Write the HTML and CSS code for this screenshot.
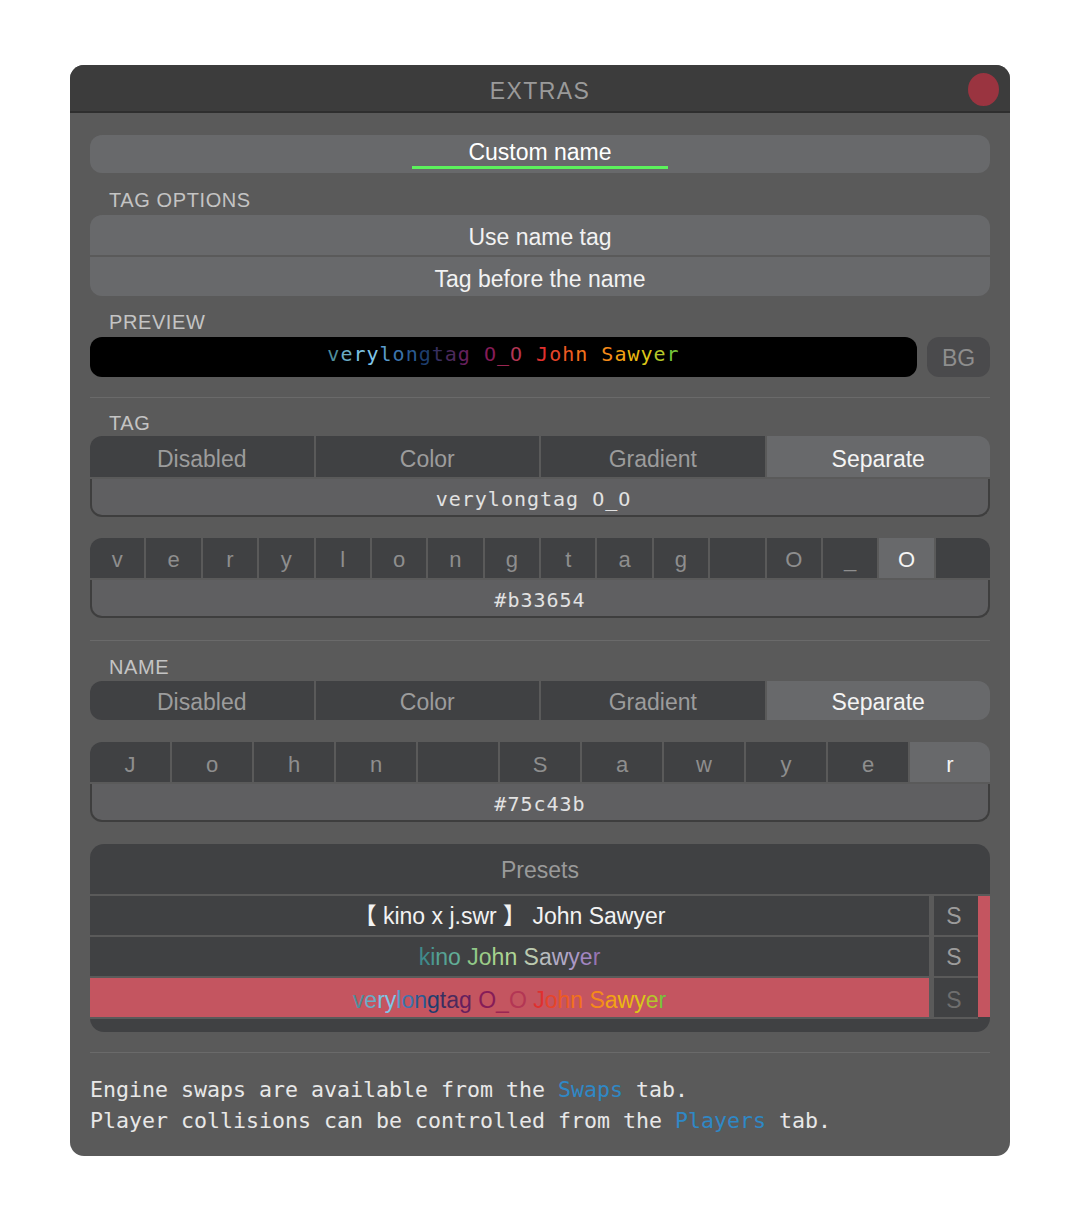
FILE: index.html
```html
<!DOCTYPE html>
<html>
<head>
<meta charset="utf-8">
<title>Extras</title>
<link rel="stylesheet" href="styles.css">
</head>
<body>
<div class="win">
  <div class="titlebar">
    <span class="title">EXTRAS</span>
    <span class="close"></span>
  </div>
  <div class="content">
    <div class="tabs"><div class="tab">Custom name</div></div>

    <div class="label l-opts">TAG OPTIONS</div>
    <div class="btngroup">
      <div class="btn">Use name tag</div>
      <div class="btn btn2">Tag before the name</div>
    </div>

    <div class="label l-prev">PREVIEW</div>
    <div class="preview-row">
      <div class="preview mono"><span style="color:#4f8e9c">v</span><span style="color:#6aacc4">e</span><span style="color:#7cc2e2">r</span><span style="color:#80c6e8">y</span><span style="color:#5a9ccc">l</span><span style="color:#3c74ac">o</span><span style="color:#2a5a92">n</span><span style="color:#1e3e6e">g</span><span style="color:#372f60">t</span><span style="color:#4c2a5c">a</span><span style="color:#66205e">g</span> <span style="color:#861c58">O</span><span style="color:#9a2652">_</span><span style="color:#b33654">O</span> <span style="color:#e0302e">J</span><span style="color:#e6442a">o</span><span style="color:#ee5a22">h</span><span style="color:#f2721c">n</span> <span style="color:#f48a1a">S</span><span style="color:#f2a214">a</span><span style="color:#ecb812">w</span><span style="color:#dcc618">y</span><span style="color:#b4c82a">e</span><span style="color:#75c43b">r</span></div>
      <div class="bgbtn">BG</div>
    </div>

    <div class="hr hr1"></div>

    <div class="label l-tag">TAG</div>
    <div class="seg">
      <div class="seg-item">Disabled</div>
      <div class="seg-item">Color</div>
      <div class="seg-item">Gradient</div>
      <div class="seg-item on">Separate</div>
    </div>
    <div class="field mono">verylongtag O_O </div>
    <div class="chars chars-tag">
      <div class="cell">v</div><div class="cell">e</div><div class="cell">r</div><div class="cell">y</div><div class="cell">l</div><div class="cell">o</div><div class="cell">n</div><div class="cell">g</div><div class="cell">t</div><div class="cell">a</div><div class="cell">g</div><div class="cell"> </div><div class="cell">O</div><div class="cell">_</div><div class="cell on">O</div><div class="cell"> </div>
    </div>
    <div class="field mono">#b33654</div>

    <div class="hr hr2"></div>

    <div class="label l-name">NAME</div>
    <div class="seg seg-name">
      <div class="seg-item">Disabled</div>
      <div class="seg-item">Color</div>
      <div class="seg-item">Gradient</div>
      <div class="seg-item on">Separate</div>
    </div>
    <div class="chars chars-name">
      <div class="cell">J</div><div class="cell">o</div><div class="cell">h</div><div class="cell">n</div><div class="cell"> </div><div class="cell">S</div><div class="cell">a</div><div class="cell">w</div><div class="cell">y</div><div class="cell">e</div><div class="cell on">r</div>
    </div>
    <div class="field mono">#75c43b</div>

    <div class="presets">
      <div class="phead">Presets</div>
      <div class="pbody">
        <div class="plist">
          <div class="prow">
            <div class="pname">【 kino x j.swr 】 John Sawyer</div>
            <div class="ps">S</div>
          </div>
          <div class="prow">
            <div class="pname"><span style="color:#3f8a8c">k</span><span style="color:#4a9690">i</span><span style="color:#56a294">n</span><span style="color:#62ae98">o</span> <span style="color:#90c888">J</span><span style="color:#9ccc88">o</span><span style="color:#a6d28e">h</span><span style="color:#aed696">n</span> <span style="color:#bccab0">S</span><span style="color:#b8bcbe">a</span><span style="color:#b2aac6">w</span><span style="color:#aa98c6">y</span><span style="color:#a286c0">e</span><span style="color:#9674b2">r</span></div>
            <div class="ps">S</div>
          </div>
          <div class="prow sel">
            <div class="pname"><span style="color:#4f8e9c">v</span><span style="color:#6aacc4">e</span><span style="color:#7cc2e2">r</span><span style="color:#80c6e8">y</span><span style="color:#5a9ccc">l</span><span style="color:#3c74ac">o</span><span style="color:#2a5a92">n</span><span style="color:#1e3e6e">g</span><span style="color:#372f60">t</span><span style="color:#4c2a5c">a</span><span style="color:#66205e">g</span> <span style="color:#861c58">O</span><span style="color:#9a2652">_</span><span style="color:#b33654">O</span> <span style="color:#e0302e">J</span><span style="color:#e6442a">o</span><span style="color:#ee5a22">h</span><span style="color:#f2721c">n</span> <span style="color:#f48a1a">S</span><span style="color:#f2a214">a</span><span style="color:#ecb812">w</span><span style="color:#dcc618">y</span><span style="color:#b4c82a">e</span><span style="color:#75c43b">r</span></div>
            <div class="ps">S</div>
          </div>
        </div>
        <div class="pscroll"></div>
      </div>
    </div>

    <div class="hr hr3"></div>

    <div class="footer mono">
      <div class="fline">Engine swaps are available from the <span class="link">Swaps</span> tab.</div>
      <div class="fline">Player collisions can be controlled from the <span class="link">Players</span> tab.</div>
    </div>
  </div>
</div>
</body>
</html>
```

FILE: styles.css
```css
body {
  margin: 0;
  background: #ffffff;
  font-family: "Liberation Sans", Arial, "Noto Sans CJK SC", sans-serif;
}

.mono {
  font-family: "DejaVu Sans Mono", "Liberation Mono", monospace;
}

.win {
  width: 940px;
  margin: 65px 0 0 70px;
  border-radius: 14px;
  overflow: hidden;
  background: #5a5a5a;
}

.titlebar {
  position: relative;
  height: 40px;
  padding-top: 6px;
  background: #3c3c3c;
  border-bottom: 2px solid #2e2e2e;
  text-align: center;
}

.title {
  font-size: 23px;
  letter-spacing: 1.4px;
  line-height: 40px;
  color: #9a9a9a;
}

.close {
  position: absolute;
  right: 11px;
  top: 8px;
  width: 31px;
  height: 33px;
  border-radius: 50%;
  background: #9a3440;
}

.content {
  display: flex;
  flex-direction: column;
  padding: 22px 20px 20px;
}

.tabs {
  height: 38px;
  background: #68696b;
  border-radius: 12px;
  display: flex;
  justify-content: center;
}

.tab {
  width: 256px;
  height: 28px;
  padding-top: 3px;
  line-height: 28px;
  border-bottom: 3px solid #5cf25c;
  text-align: center;
  color: #ffffff;
  font-size: 23px;
}

.label {
  height: 22px;
  line-height: 22px;
  padding-left: 19px;
  font-size: 20px;
  letter-spacing: 0.6px;
  color: #c4c4c4;
}

.l-opts { margin: 16px 0 4px; }
.l-prev { margin: 15px 0 4px; }
.l-tag { margin: 14px 0 2px; }
.l-name { margin: 15px 0 3px; }

.btngroup {
  display: flex;
  flex-direction: column;
  gap: 2px;
  border-radius: 12px;
  overflow: hidden;
}

.btn {
  height: 40px;
  line-height: 44px;
  background: #68696b;
  color: #f2f2f2;
  font-size: 23px;
  text-align: center;
}

.btn2 {
  height: 39px;
  line-height: 45px;
}

.preview-row {
  display: flex;
  gap: 10px;
  height: 40px;
}

.preview {
  flex: 1;
  background: #000000;
  border-radius: 12px;
  text-align: center;
  line-height: 35px;
  font-size: 20px;
  letter-spacing: 1px;
  white-space: pre;
}

.bgbtn {
  width: 63px;
  background: #4a4a4c;
  border-radius: 12px;
  color: #8e8e8e;
  font-size: 23px;
  text-align: center;
  line-height: 42px;
}

.hr {
  height: 1px;
  background: #6a6a6a;
}

.hr1 { margin-top: 20px; }
.hr2 { margin-top: 22px; }
.hr3 { margin-top: 20px; }

.seg {
  display: flex;
  gap: 2px;
  height: 41px;
  border-radius: 12px 12px 0 0;
  overflow: hidden;
}

.seg-name {
  height: 39px;
  border-radius: 12px;
}

.seg-item {
  flex: 1;
  background: #404143;
  color: #9c9c9c;
  font-size: 23px;
  text-align: center;
  line-height: 47px;
}

.seg-name .seg-item {
  line-height: 43px;
}

.seg-item.on {
  background: #68696b;
  color: #f4f4f4;
}

.field {
  margin-top: 2px;
  height: 36px;
  line-height: 41px;
  background: #5f5f61;
  border: 2px solid #3e3e3e;
  border-top: 0;
  border-radius: 0 0 12px 12px;
  text-align: center;
  color: #e2e2e2;
  font-size: 20px;
  letter-spacing: 1px;
  white-space: pre;
}

.chars {
  display: flex;
  gap: 2px;
  height: 40px;
  border-radius: 12px 12px 0 0;
  overflow: hidden;
}

.chars-tag { margin-top: 21px; }
.chars-name { margin-top: 22px; }

.cell {
  flex: 1;
  background: #404143;
  color: #8e8e8e;
  font-size: 22px;
  text-align: center;
  line-height: 43px;
  white-space: pre;
}

.chars-name .cell {
  line-height: 46px;
}

.cell.on {
  background: #68696b;
  color: #f4f4f4;
}

.presets {
  margin-top: 22px;
  background: #404143;
  border-radius: 14px;
  overflow: hidden;
  padding-bottom: 13px;
}

.phead {
  height: 50px;
  line-height: 52px;
  text-align: center;
  color: #9a9a9a;
  font-size: 23px;
  border-bottom: 2px solid #5a5a5a;
}

.pbody {
  display: flex;
}

.plist {
  flex: 1;
  display: flex;
  flex-direction: column;
  gap: 2px;
  background: #5a5a5a;
  border-bottom: 2px solid #5a5a5a;
}

.prow {
  display: flex;
  height: 39px;
  background: #404143;
  padding-right: 4px;
}

.pname {
  flex: 1;
  text-align: center;
  line-height: 40px;
  font-size: 23px;
  color: #f2f2f2;
  white-space: pre;
}

.prow.sel .pname {
  background: #c45560;
  line-height: 44px;
}

.ps {
  width: 40px;
  border-left: 5px solid #5a5a5a;
  text-align: center;
  line-height: 40px;
  font-size: 23px;
  color: #9c9c9c;
}

.prow.sel .ps {
  color: #6e6e6e;
  line-height: 44px;
}

.pscroll {
  width: 12px;
  background: #c45560;
  margin-bottom: 2px;
}

.footer {
  margin-top: 21px;
  font-size: 21.6px;
  color: #e8e8e8;
}

.fline {
  height: 31px;
  line-height: 31px;
  white-space: pre;
}

.link {
  color: #2f88c6;
}
```
